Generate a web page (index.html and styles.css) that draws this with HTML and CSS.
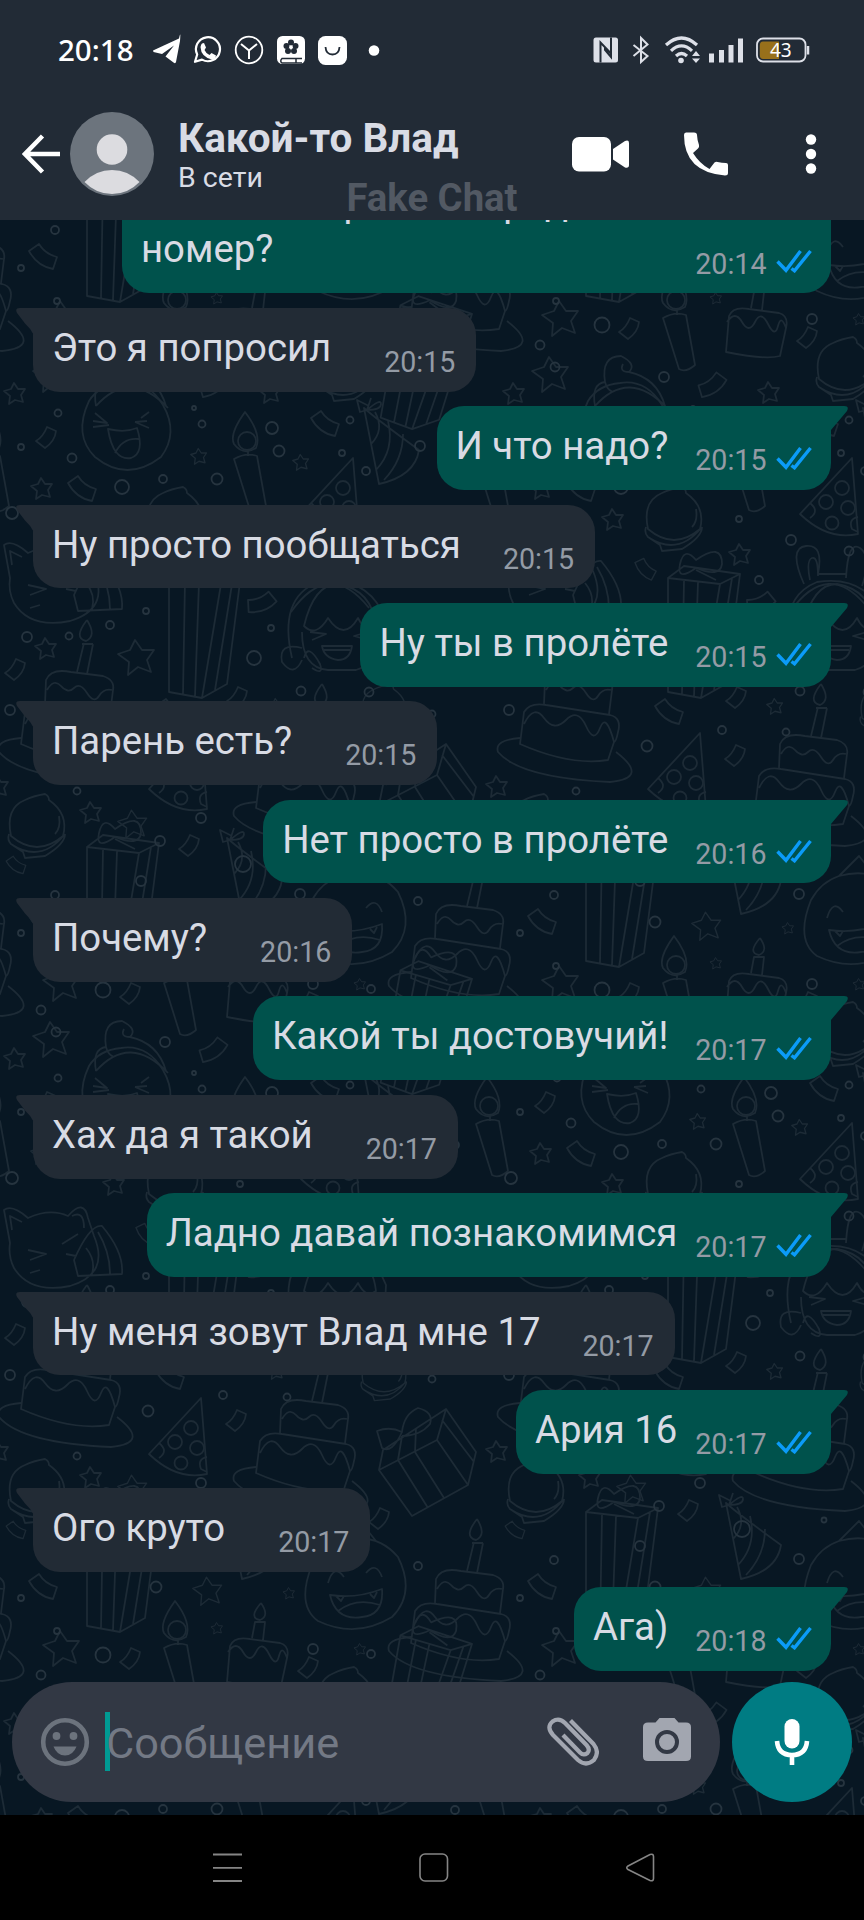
FILE: index.html
```html
<!DOCTYPE html>
<html lang="ru">
<head>
<meta charset="utf-8">
<title>Какой-то Влад</title>
<link rel="stylesheet" href="styles.css">
</head>
<body>
<svg class="defs" width="0" height="0">
  <defs>
    <symbol id="checks" viewBox="0 0 36 24"><path d="M1.500 12.500 10 21.300 24.500 2M15.500 19.500 18.500 21.800 34.500 2" fill="none" stroke="#0b9bf8" stroke-width="3.400"/></symbol>
    <symbol id="tail-in" viewBox="0 0 18 27"><path d="M18 0H4Q-1.500 0 1 5L9 15.500Q15 21 17.500 26.500H18Z" fill="#222b35"/></symbol>
    <symbol id="tail-out" viewBox="0 0 18 27"><path d="M0 0H14Q19.500 0 17 5L1 24V27H0Z" fill="#00524c"/></symbol>

    <path id="star" d="M-2-16 5-6 17-6 10 4 14 16 1 11-9 19-8 6-19-2-7-6Z"/>
    <path id="star-s" d="M-1-10 3-4 10-4 6 2 8 9 0 7-6 11-5 3-11-2-4-4Z"/>
    <path id="strip" d="M-4-14Q2-4 14-1L10 11Q-6 8-14-7Z"/>
    <path id="strip-s" d="M0-10 9-6Q8 4-2 11L-11 4Q-4 0 0-10Z"/>
    <g id="candle"><path d="M2-50Q-14-28-9-18Q0-6 13-14Q19-28 2-50ZM5-12V-6M-9-3Q3-10 14-6L23 44Q14 52 7 48Z"/><circle cx="4" cy="-21" r="9"/></g>
    <g id="cake">
      <path d="M6-78Q-8-60 5-57Q16-62 6-78M3-55-4-26M12-54 6-24M1-54H12"/>
      <path d="M-36 6-35-18Q-30-30-10-26L22-22Q34-18 32-8L29 16M-34-8Q-27-20-20-12T-7-10T6-5T18-2T31-8"/>
      <path d="M-60 46-56 14Q-50 4-34 7L30 17Q42 20 38 34Q36 44 34 44L28 62Q-10 68-60 46ZM-56 26Q-46 6-36 20T-14 22T6 28T20 30T34 44"/>
      <path d="M-60 40Q-86 42-82 54Q-60 80 30 84Q70 80 36 54"/>
    </g>
    <g id="cake-s"><path d="M-29 34-26-2Q-22-12-6-9L24-5Q34-2 31 10L25 38Q10 42-29 34ZM-28 4Q-20-8-13 4T0 4T13 6T23 8T31 10M-4-10-1-26H9L7-8M5-45Q-8-30 4-28Q14-32 5-45"/></g>
    <g id="gift"><path d="M-36-34-20-46 36-38 22 72-3 86-36 80ZM-36-34 16-28 36-38M16-28-3 86M-20-32-22 82M-6-30-10 84M-8-42 12-32M28-34 10 78M-8-44Q-28-30-24-48T-8-52Q18-70 18-48Q16-34-8-44"/></g>
    <g id="gift-tilt"><path d="M-47 4-43-16 20-57 50-14 42 19-14 50ZM-47 4 11-26 20-57M11-26 42 19M-28-6 2 42M-11-14 18 32M-24-30-28-6M-10-38-11-14M16-46 48-4M-24-34Q-34-12-44-18L-49-35Q-36-40-24-34Q-22-52-8-58Q8-54 4-42Q-6-30-24-30"/></g>
    <g id="pizza"><path d="M20-39 26 37Q-4 44-32 17Z"/><circle cx="10" cy="-9" r="7"/><circle cx="-6" cy="5" r="7"/><circle cx="16" cy="11" r="7"/><circle cx="0" cy="26" r="6.500"/><path d="M26 20Q16 22 20 32L26 35M-22 6Q-12 14-22 21"/></g>
    <g id="macaron"><path d="M-26 10Q-32-18-12-26Q-4-30 8-32Q12-30 12-26Q32-12 26 10Q0 32-26 10ZM-28 8Q-30 14-26 18Q4 38 28 8M-26 18-14 26-12 32 8 30Q28 18 28 8M22-10Q24 2 18 8"/></g>
    <g id="hat"><path d="M-25-32Q-14-22 30 10Q26 36-10 44ZM-20-34-32-40-29-28-22-30-18-42M-22-30Q-8-42-8-36T-22-30M-14-28Q-4-10-18 4M-1-19Q6 10-13 30M14-6Q14 20-5 40"/></g>
    <g id="laugh"><path d="M-38-28Q-54 6-32 28Q0 54 34 28Q52 4 36-24Q20-50-6-46Q-28-44-38-28ZM-19 0Q-2 4 10-1Q18 24 4 29Q-14 32-19 0ZM-12 24Q-4 8 12 10M-34-8-20-6-32-16M-34-2-18-4M14-11 22-17M20-8 8-7M22-1 8-7"/></g>
    <g id="bun"><path d="M-34-38Q-38-60-24-62Q-28-88-8-88Q8-80 0-72Q-10-72-6-80M0-72Q28-66 36-38M-34-38Q0-76 38-36M-24-62Q-22-54-16-52"/></g>
    <g id="grin"><path d="M-44-20Q-60 20-38 36Q0 54 36 32Q60 8 42-28Q20-54-16-44Q-34-38-44-20ZM-16-44 4-64 20-44M-28-2Q-22-22-12-8M10-12Q20-24 26-8M-26 10Q0 14 26 4Q28 30 6 32Q-20 36-26 10ZM-18 26Q0 12 24 20M-20 11-15 16-12 11M14 9 18 13 21 7"/></g>
    <g id="cat"><path d="M-40-5-46-38Q-38-44-22-30Q0-40 18-32Q34-50 38-30L44-12Q60 26 20 38Q-20 46-36 20Q-42 8-40-5ZM-38-18-40-32-28-26M22-32Q34-38 34-20M-22 2-4 6-20 12M-20 25-10 22M12-4 28-14M16 6 26 8M24 12Q40-24 52-22Q74 4 72 26L28 28ZM36 0Q46 12 42 26M48-16Q60 4 60 26"/></g>
    <g id="girl"><path d="M-46 30Q-60-30-20-46Q30-54 48-8L46 30M-34-2Q-24-44 0-44Q34-38 38-2Q28 6 20-10Q6 14-10-10Q-22 10-34-2ZM-36 4Q-36 40-10 42H18Q40 36 40 4M-28 4-12 6-26 12M30 4 16 8 30 12M-16 18H14Q12 32 0 32Q-14 30-16 18ZM-14 22H12M-36 20Q-60 14-56 34Q-44 50-36 32M-34 30Q-30 14-18 36Q-14 48-26 40"/></g>
    <g id="ears"><path d="M-38 38Q0-16 40 34M-24 10Q-40-26-22-28T-10 0M-18 6Q-22-14-16-16T-10 2M18 4Q20-34 32-26T34 12M-10 0H18"/></g>

    <g id="tile" fill="none" stroke="#1d2b36" stroke-width="1.800" stroke-linejoin="round">
      <use href="#laugh" x="127" y="429"/><use href="#bun" x="130" y="444"/>
      <use href="#candle" x="243" y="462"/><use href="#candle" x="-14" y="462"/><use href="#candle" x="173" y="986"/>
      <use href="#hat" x="389" y="440"/><use href="#hat" x="252" y="870"/>
      <use href="#pizza" x="333" y="497"/><use href="#pizza" x="181" y="772"/>
      <use href="#macaron" x="175" y="519"/><use href="#macaron" x="37" y="826"/><use href="#macaron" x="346" y="369"/><use href="#macaron" transform="translate(384 710) scale(.8)"/>
      <use href="#cat" x="50" y="583"/><use href="#girl" x="338" y="628"/><use href="#ears" x="329" y="574"/>
      <use href="#gift" x="205" y="612"/><use href="#gift" x="123" y="881"/>
      <use href="#gift-tilt" x="426" y="801"/><use href="#gift" transform="translate(430 345) rotate(10)"/>
      <use href="#grin" x="356" y="920"/>
      <use href="#cake" x="-28" y="932"/><use href="#cake" x="316" y="762"/><use href="#cake" x="81" y="698"/>
      <use href="#cake-s" x="256" y="983"/>
      <use href="#star" x="137" y="656"/><use href="#star" x="62" y="982"/><use href="#star" x="52" y="1038"/>
      <use href="#star" transform="translate(133 823) scale(.8)"/><use href="#star" transform="translate(208 925) scale(.8)"/>
      <use href="#star-s" x="15" y="393"/><use href="#star-s" x="42" y="488"/><use href="#star-s" x="114" y="519"/><use href="#star-s" x="91" y="812"/><use href="#star-s" x="270" y="392"/><use href="#star-s" x="241" y="554"/><use href="#star-s" x="46" y="648"/><use href="#star-s" x="-2" y="786"/>
      <use href="#star-s" transform="translate(199 456) scale(.75)"/><use href="#star-s" transform="translate(301 462) scale(.75)"/><use href="#star-s" transform="translate(276 706) scale(.75)"/><use href="#star-s" transform="translate(217 963) scale(.55)"/><use href="#star-s" transform="translate(360 984) scale(.55)"/><use href="#star-s" transform="translate(289 928) scale(.55)"/>
      <use href="#strip" x="43" y="923"/><use href="#strip" x="82" y="490"/><use href="#strip" x="325" y="425"/><use href="#strip" x="170" y="713"/><use href="#strip" transform="translate(16 866) scale(.7)"/>
      <use href="#strip" transform="translate(214 386) rotate(-72)"/><use href="#strip" transform="translate(262 604) rotate(-58)"/><use href="#strip" transform="translate(146 570) rotate(10) scale(.8)"/>
      <use href="#strip-s" x="47" y="437"/><use href="#strip-s" x="131" y="993"/><use href="#strip-s" x="190" y="845"/><use href="#strip-s" x="16" y="669"/><use href="#strip-s" x="309" y="1002"/><use href="#strip-s" x="238" y="697"/><use href="#strip-s" x="237" y="755"/><use href="#strip-s" x="380" y="853"/>
      <g stroke="#26343f">
        <circle cx="122" cy="487" r="7"/><circle cx="272" cy="428" r="6"/><circle cx="279" cy="451" r="5.500"/><circle cx="217" cy="479" r="5.500"/><circle cx="163" cy="479" r="4"/><circle cx="72" cy="458" r="4.500"/><circle cx="21" cy="447" r="3"/><circle cx="58" cy="413" r="3.500"/><circle cx="202" cy="424" r="3.500"/><circle cx="350" cy="420" r="3.500"/><circle cx="366" cy="471" r="4"/><circle cx="420" cy="446" r="5"/><circle cx="342" cy="453" r="3"/><circle cx="194" cy="408" r="2"/>
        <circle cx="12" cy="513" r="6"/><circle cx="254" cy="658" r="7"/><circle cx="110" cy="625" r="4"/><circle cx="146" cy="611" r="3"/><circle cx="27" cy="637" r="5"/><circle cx="69" cy="636" r="3.500"/><circle cx="10" cy="710" r="5"/><circle cx="301" cy="691" r="4.500"/><circle cx="369" cy="692" r="4.500"/><circle cx="271" cy="628" r="3"/><circle cx="148" cy="746" r="5.500"/><circle cx="223" cy="730" r="4"/><circle cx="287" cy="732" r="3.500"/><circle cx="77" cy="791" r="3.500"/><circle cx="201" cy="818" r="5"/><circle cx="160" cy="841" r="5"/><circle cx="243" cy="864" r="8"/><circle cx="141" cy="881" r="5"/><circle cx="55" cy="895" r="4"/><circle cx="300" cy="894" r="5"/><circle cx="418" cy="901" r="4"/><circle cx="21" cy="933" r="3"/><circle cx="156" cy="922" r="5.500"/><circle cx="103" cy="990" r="7.500"/><circle cx="41" cy="1010" r="4.500"/><circle cx="165" cy="1042" r="5"/><circle cx="313" cy="984" r="5"/><circle cx="371" cy="989" r="4"/><circle cx="56" cy="1032" r="4.500"/><circle cx="325" cy="855" r="2.500"/><circle cx="57" cy="966" r="3"/><circle cx="240" cy="519" r="3"/><circle cx="292" cy="540" r="5"/><circle cx="350" cy="551" r="4.500"/><circle cx="260" cy="580" r="4"/><circle cx="440" cy="635" r="4"/><circle cx="455" cy="480" r="4"/><circle cx="462" cy="552" r="6"/><circle cx="432" cy="714" r="3.500"/>
      </g>
    </g>
  </defs>
</svg>

<div class="phone">
  <header class="header">
    <div class="status">
      <span class="clock">20:18</span>
      <svg class="status-apps" width="234" height="40" viewBox="0 0 234 40">
        <path d="M1 20.500 27 8.500Q29-.5 28 11L24 32Q23.500 34 21.500 32.500L13.500 26.500 22 15.500 10 24 1.500 22Z" fill="#fff"/>
        <path d="M43 31.800 45.200 24.500A12 12 0 1 1 50 29.600Z" fill="none" stroke="#fff" stroke-width="2.200" stroke-linejoin="round"/>
        <path d="M50 13.500 52 13 54 17.500 52.500 20Q54 23.500 57.500 25L59.500 23 64 25.500Q63.500 29 60 29.500Q49 27 48.500 17Q49 14 50 13.500Z" fill="#fff"/>
        <circle cx="97" cy="20" r="13.300" fill="none" stroke="#fff" stroke-width="1.800"/>
        <path d="M89 14 97 20.500 105 14M97 20.500V29" fill="none" stroke="#fff" stroke-width="2"/>
        <rect x="125" y="6" width="28" height="28" rx="5.500" fill="#fff"/>
        <g fill="#222b36"><circle cx="139" cy="12.500" r="3"/><circle cx="134.500" cy="16" r="3"/><circle cx="143.500" cy="16" r="3"/><circle cx="136" cy="21" r="3"/><circle cx="142" cy="21" r="3"/></g>
        <circle cx="139" cy="17" r="1.500" fill="#fff"/>
        <path d="M150 28.500H130Q127.500 31 130 33H150M144 29V33" fill="none" stroke="#222b36" stroke-width="1.500"/>
        <rect x="166" y="6" width="29" height="29" rx="7.500" fill="#fff"/>
        <path d="M173.500 17Q174 24.500 180.500 24.500T187.500 17" fill="none" stroke="#222b36" stroke-width="1.800"/>
        <circle cx="222" cy="20.500" r="5.300" fill="#fff"/>
      </svg>
      <svg class="status-system" width="218" height="32" viewBox="0 0 218 32">
        <rect x="1.500" y="3.500" width="24.500" height="25" rx="2.500" fill="#dde0e8"/>
        <path d="M8.500 28.500V8.500L19 19.500M19 3.500V23L13 16V13" fill="none" stroke="#222b36" stroke-width="2"/>
        <path d="M41.500 11 55.500 22 49 28V4L55.500 10.500 41.500 22" fill="none" stroke="#dde0e8" stroke-width="2"/>
        <path d="M74 11Q89.500-3 105 11M79 16.800Q89.500 7 100 16.800M84 22Q89.500 17 95 22" fill="none" stroke="#dde0e8" stroke-width="3.200"/>
        <circle cx="89" cy="26.500" r="2.800" fill="#dde0e8"/><path d="M100 22 104 17 108 22ZM100 24.500H108L104 29Z" fill="#dde0e8"/>
        <path d="M119.500 28.500V19.500M129.500 28.500V16M139 28.500V11M148.500 28.500V4.500" stroke="#dde0e8" stroke-width="5"/>
        <rect x="165" y="4.500" width="48.500" height="23" rx="6" fill="none" stroke="#dde0e8" stroke-width="1.800"/>
        <path d="M187 7.500V25H171Q167.800 25 167.800 21V11.500Q167.800 7.500 171 7.500Z" fill="#98701b"/>
        <path d="M216 12V20.500" stroke="#dde0e8" stroke-width="2.500"/>
        <text x="178" y="23" class="battery">43</text>
      </svg>
    </div>
    <div class="contact">
      <svg class="back" width="40" height="40" viewBox="0 0 40 40"><path d="M38 20H4M20.500 2 3 20 20.500 38" fill="none" stroke="#fff" stroke-width="4.500"/></svg>
      <svg class="avatar" width="84" height="84" viewBox="0 0 84 84"><circle cx="42" cy="42" r="42" fill="#6c747d"/><circle cx="42" cy="37.500" r="15.300" fill="#dcdce0"/><path d="M14.500 70Q26 58 42 58T69.500 70Q58 82 42 82T14.500 70Z" fill="#dcdce0"/></svg>
      <div class="who">
        <div class="name">Какой-то Влад</div>
        <div class="presence">В сети</div>
      </div>
      <svg class="actions" width="246" height="46" viewBox="0 0 246 46">
        <rect x="0" y="6" width="39" height="34.500" rx="7" fill="#fff"/><path d="M41 18 53 10Q57 8.500 57 12V34Q57 37.500 53 36.500L41 28.500Z" fill="#fff"/>
        <path d="M114 1.500H122Q125 1.500 125 4Q125.200 9 127 14Q127.500 16 126 17.500L121 22Q127.500 32.500 137.500 38L142.500 31.500Q144 30.500 145.500 31Q150 32 154 32Q156 32 156 34V42Q156 44.500 153 44.500Q112 41 112 4Q112 1.500 114 1.500Z" fill="#fff"/>
        <g fill="#fff"><circle cx="239" cy="8.500" r="5.200"/><circle cx="239" cy="23" r="5.200"/><circle cx="239" cy="37.500" r="5.200"/></g>
      </svg>
    </div>
    <div class="watermark">Fake Chat</div>
  </header>

  <main class="chat">
    <svg class="wallpaper" width="864" height="1595" viewBox="0 220 864 1595">
      <use href="#tile" x="-499" y="-665"/><use href="#tile" y="-665"/><use href="#tile" x="499" y="-665"/>
      <use href="#tile" x="-499"/><use href="#tile"/><use href="#tile" x="499"/>
      <use href="#tile" x="-499" y="665"/><use href="#tile" y="665"/><use href="#tile" x="499" y="665"/>
      <use href="#tile" x="-499" y="1330"/><use href="#tile" y="1330"/><use href="#tile" x="499" y="1330"/>
    </svg>

    <div class="messages">
      <div class="msg out long"><p class="text">Зачем ты просил передать мой<br>номер?</p><span class="time">20:14</span><svg class="checks"><use href="#checks"/></svg></div>
      <div class="msg in"><svg class="tail"><use href="#tail-in"/></svg><p class="text">Это я попросил</p><span class="time">20:15</span></div>
      <div class="msg out"><svg class="tail"><use href="#tail-out"/></svg><p class="text">И что надо?</p><span class="time">20:15</span><svg class="checks"><use href="#checks"/></svg></div>
      <div class="msg in near"><svg class="tail"><use href="#tail-in"/></svg><p class="text">Ну просто пообщаться</p><span class="time">20:15</span></div>
      <div class="msg out"><svg class="tail"><use href="#tail-out"/></svg><p class="text">Ну ты в пролёте</p><span class="time">20:15</span><svg class="checks"><use href="#checks"/></svg></div>
      <div class="msg in"><svg class="tail"><use href="#tail-in"/></svg><p class="text">Парень есть?</p><span class="time">20:15</span></div>
      <div class="msg out"><svg class="tail"><use href="#tail-out"/></svg><p class="text">Нет просто в пролёте</p><span class="time">20:16</span><svg class="checks"><use href="#checks"/></svg></div>
      <div class="msg in"><svg class="tail"><use href="#tail-in"/></svg><p class="text">Почему?</p><span class="time">20:16</span></div>
      <div class="msg out"><svg class="tail"><use href="#tail-out"/></svg><p class="text">Какой ты достовучий!</p><span class="time">20:17</span><svg class="checks"><use href="#checks"/></svg></div>
      <div class="msg in"><svg class="tail"><use href="#tail-in"/></svg><p class="text">Хах да я такой</p><span class="time">20:17</span></div>
      <div class="msg out near"><svg class="tail"><use href="#tail-out"/></svg><p class="text">Ладно давай познакомимся</p><span class="time">20:17</span><svg class="checks"><use href="#checks"/></svg></div>
      <div class="msg in near"><svg class="tail"><use href="#tail-in"/></svg><p class="text">Ну меня зовут Влад мне 17</p><span class="time">20:17</span></div>
      <div class="msg out near"><svg class="tail"><use href="#tail-out"/></svg><p class="text">Ария 16</p><span class="time">20:17</span><svg class="checks"><use href="#checks"/></svg></div>
      <div class="msg in"><svg class="tail"><use href="#tail-in"/></svg><p class="text">Ого круто</p><span class="time">20:17</span></div>
      <div class="msg out"><svg class="tail"><use href="#tail-out"/></svg><p class="text">Ага)</p><span class="time">20:18</span><svg class="checks"><use href="#checks"/></svg></div>
    </div>

    <div class="composer">
      <div class="field">
        <svg class="smile" width="50" height="50" viewBox="0 0 50 50"><circle cx="25" cy="25" r="21.800" fill="none" stroke="#6c737d" stroke-width="4.600"/><g fill="#6c737d"><circle cx="16.500" cy="19" r="3.900"/><circle cx="33.500" cy="19" r="3.900"/><path d="M13.500 29.500H36.500Q33 38.500 25 38.500T13.500 29.500Z"/></g></svg>
        <span class="caret"></span>
        <span class="placeholder">Сообщение</span>
        <svg class="clip" width="52" height="50" viewBox="0 0 52 50"><path d="M23.500 3.500 46.500 27Q53 35 47 43Q39 50 31 43L6 18Q-1 10 5.500 4.500Q12 0 18 6L39.500 28Q43.500 32.500 40.500 36Q36.500 39 33 35.500L16 18" fill="none" stroke="#a2a6b0" stroke-width="4.200" stroke-linejoin="round"/></svg>
        <svg class="camera" width="50" height="46" viewBox="0 0 50 46"><path d="M17.500 1H32.500L36.500 5.500H44Q49 5.500 49 10V39.500Q49 44 44 44H6Q1 44 1 39.500V10Q1 5.500 6 5.500H13.500Z" fill="#a2a6b0"/><circle cx="25" cy="25" r="10" fill="#a2a6b0" stroke="#323844" stroke-width="4"/></svg>
      </div>
      <div class="mic"><svg width="36" height="48" viewBox="0 0 36 48"><rect x="10.500" y="1" width="15" height="29.500" rx="7.500" fill="#fff"/><path d="M3 23Q4 37 18 37T33 23M18 37V47" fill="none" stroke="#fff" stroke-width="4.600"/></svg></div>
    </div>
  </main>

  <nav class="nav">
    <svg width="32" height="32" viewBox="0 0 32 32"><path d="M2 2.500H31M2 15.800H31M2 29H31" stroke="#858585" stroke-width="1.800"/></svg>
    <svg width="32" height="32" viewBox="0 0 32 32"><rect x="2" y="2" width="27.500" height="27" rx="5" fill="none" stroke="#858585" stroke-width="1.600"/></svg>
    <svg width="32" height="32" viewBox="0 0 32 32"><path d="M3 14 25 2.500Q28.500 1.500 28.500 4.500V26.500Q28.500 29.500 25 28.500L3 17.500Q.5 15.800 3 14Z" fill="none" stroke="#858585" stroke-width="1.600"/></svg>
  </nav>
</div>
</body>
</html>
```

FILE: styles.css
```css
* { box-sizing: border-box; }

body {
  margin: 0;
  background: #000;
  font-family: Roboto, "Noto Sans", sans-serif;
}

.defs { position: absolute; }

.phone {
  width: 864px;
  height: 1920px;
  display: flex;
  flex-direction: column;
  overflow: hidden;
}

.header {
  position: relative;
  height: 220px;
  flex: none;
  background: #222b36;
}

.status {
  display: flex;
  align-items: center;
  height: 99px;
  padding: 0 54px 0 58px;
}

.clock {
  width: 94px;
  font: 500 29.500px/40px "Noto Sans", sans-serif;
  color: #fff;
}

.status-system { margin-left: auto; }

.battery { font: 19px "Noto Sans", sans-serif; fill: #fff; }

.contact {
  display: flex;
  height: 109px;
  align-items: center;
  padding-left: 21.500px;
}

.back { margin-right: 8.500px; }
.avatar { margin-right: 24px; }
.who { flex: 1; }

.name {
  font-size: 40.500px;
  font-weight: 700;
  line-height: 48px;
  color: #d9dce5;
  white-space: nowrap;
}

.presence {
  font-size: 28.500px;
  line-height: 32px;
  color: #d9dce5;
}

.actions { flex: none; margin-right: 46.500px; }

.watermark {
  position: absolute;
  left: 0;
  right: 0;
  top: 174.500px;
  text-align: center;
  font-size: 38.300px;
  font-weight: 700;
  line-height: 46px;
  color: #525963;
}

.chat {
  position: relative;
  height: 1595px;
  flex: none;
  display: flex;
  flex-direction: column;
  justify-content: flex-end;
  overflow: hidden;
  background: #081723;
}

.wallpaper { position: absolute; left: 0; top: 0; }

.messages {
  position: relative;
  display: flex;
  flex-direction: column;
  gap: 14.600px;
  padding: 0 33px;
  margin-bottom: 11.400px;
}

.msg {
  position: relative;
  display: flex;
  height: 83.800px;
  padding: 0 21px 0 19px;
  border-radius: 27px;
}

.in { align-self: flex-start; background: #222b35; border-top-left-radius: 0; }
.out { align-self: flex-end; background: #00524c; border-top-right-radius: 0; padding-right: 19px; }

.text {
  margin: 0 53px 0 0;
  font-size: 38.350px;
  line-height: 80px;
  color: #d8dbe4;
  white-space: nowrap;
}

.near .text { margin-right: 42px; }
.out .text { margin-right: 27px; }
.out.near .text { margin-right: 18px; }

.time {
  padding-top: 36px;
  font-size: 28.600px;
  line-height: 36px;
  color: #949ba5;
}

.checks { width: 36px; height: 24px; margin: 39.500px 0 0 9.500px; flex: none; }

.tail { position: absolute; top: 0; width: 18px; height: 27px; }
.in .tail { left: -17px; }
.out .tail { right: -17px; }

.long { width: 709px; height: 128px; }
.long .text { flex: 1; min-width: 0; margin: 0; padding-top: 15px; line-height: 46px; }
.long .time { padding-top: 80.500px; }
.long .checks { margin-top: 84px; }

.composer {
  position: relative;
  flex: none;
  display: flex;
  gap: 12px;
  padding: 0 12px 13px;
}

.field {
  flex: 1;
  height: 120px;
  display: flex;
  align-items: center;
  padding: 0 28px;
  border-radius: 60px;
  background: #323844;
}

.caret { width: 5px; height: 59px; margin: -2px -4px 0 15px; background: #009a93; }

.placeholder {
  flex: 1;
  padding-top: 4px;
  font-size: 43.300px;
  line-height: 60px;
  color: #737985;
}

.clip { margin-right: 43px; margin-left: -1px; }
.camera { margin-top: -5px; }

.mic {
  width: 120px;
  height: 120px;
  display: flex;
  align-items: center;
  justify-content: center;
  border-radius: 50%;
  background: #007c83;
}

.nav {
  flex: 1;
  display: flex;
  justify-content: space-between;
  align-items: center;
  padding: 0 207px 0 211px;
  background: #000;
}
```
